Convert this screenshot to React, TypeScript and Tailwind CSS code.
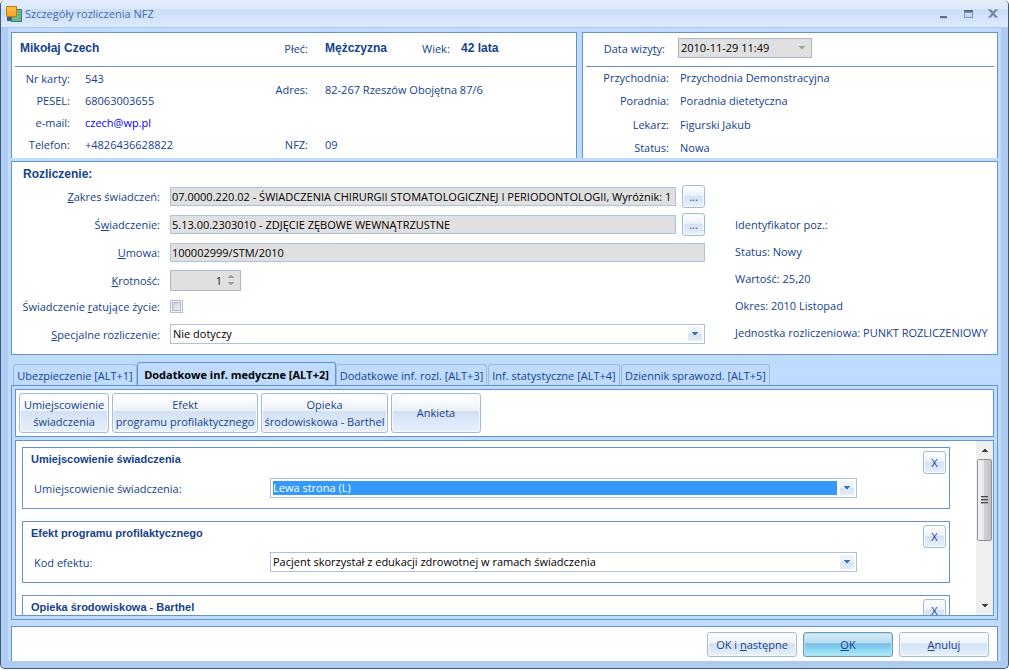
import React from 'react';

const panel = 'border border-[#6593cf] bg-white';
const button =
  'rounded-[3px] border border-[#a3bdd0] bg-[linear-gradient(#ffffff,#edf2f9_45%,#d2e1f4_46%,#e8f1fd)] text-center shadow-[inset_0_0_0_1px_#f6f9fd] hover:brightness-105';
const heading = 'font-["Liberation_Sans",sans-serif] font-bold';

const patient = [
  { label: 'Nr karty:', value: '543' },
  { label: 'PESEL:', value: '68063003655' },
  { label: 'e-mail:', value: 'czech@wp.pl', href: 'mailto:czech@wp.pl' },
  { label: 'Telefon:', value: '+4826436628822' },
];

const visit = [
  { label: 'Przychodnia:', value: 'Przychodnia Demonstracyjna' },
  { label: 'Poradnia:', value: 'Poradnia dietetyczna' },
  { label: 'Lekarz:', value: 'Figurski Jakub' },
  { label: 'Status:', value: 'Nowa' },
];

const info = [
  'Identyfikator poz.:',
  'Status: Nowy',
  'Wartość: 25,20',
  'Okres: 2010 Listopad',
  'Jednostka rozliczeniowa: PUNKT ROZLICZENIOWY',
];

const tabs = [
  { text: 'Ubezpieczenie [ALT+1]', width: 'w-[124px]' },
  { text: 'Dodatkowe inf. medyczne [ALT+2]', width: 'w-[199px]' },
  { text: 'Dodatkowe inf. rozl. [ALT+3]', width: 'w-[151px]' },
  { text: 'Inf. statystyczne [ALT+4]', width: 'w-[132px]' },
  { text: 'Dziennik sprawozd. [ALT+5]', width: 'w-[149px]' },
];

const tools = [
  { lines: ['Umiejscowienie', 'świadczenia'], width: 'w-[90px]' },
  { lines: ['Efekt', 'programu profilaktycznego'], width: 'w-[146px]' },
  { lines: ['Opieka', 'środowiskowa - Barthel'], width: 'w-[127px]' },
  { lines: ['Ankieta'], width: 'w-[90px]' },
];

const Arrow: React.FC<{ up?: boolean }> = ({ up }) => (
  <svg width="6" height="4" viewBox="0 0 6 4" shapeRendering="crispEdges" aria-hidden="true">
    <path d={up ? 'M0 4h6L3 0z' : 'M0 0h6L3 4z'} fill="currentColor" />
  </svg>
);

type ComboProps = {
  id: string;
  value: string;
  disabled?: boolean;
  selected?: boolean;
  className?: string;
};

const Combo: React.FC<ComboProps> = ({ id, value, disabled, selected, className = '' }) => (
  <div
    className={`flex h-[20px] min-w-0 items-stretch border p-[2px] ${
      disabled ? 'border-[#a9b8c6] bg-[#e0e0e0]' : 'border-[#abc1de] bg-white'
    } ${className}`}
  >
    <select
      id={id}
      disabled={disabled}
      className={`min-w-0 flex-1 appearance-none text-[11px] leading-[14px] opacity-100 outline-none ${
        selected ? 'bg-[#3399ff] text-white' : 'text-black'
      }`}
    >
      <option>{value}</option>
    </select>
    <span
      className={`ml-[3px] flex w-[14px] items-center justify-center ${
        disabled ? 'text-[#a5a294]' : 'bg-[linear-gradient(#eef4fc_50%,#d3e3f6_51%,#e3edfb)] text-[#3f6fae]'
      }`}
    >
      <Arrow />
    </span>
  </div>
);

const Field: React.FC<{ id: string; value: string }> = ({ id, value }) => (
  <input
    id={id}
    readOnly
    defaultValue={value}
    className="h-[19px] min-w-0 flex-1 border border-[#abc1de] bg-[#e0e0e0] px-px text-[11px] text-black outline-none"
  />
);

type RowProps = {
  id: string;
  before?: string;
  hot: string;
  after: string;
  height?: string;
  children: React.ReactNode;
};

const FormRow: React.FC<RowProps> = ({ id, before, hot, after, height = 'h-[28px]', children }) => (
  <div className={`flex items-center ${height}`}>
    <label htmlFor={id} className="mr-[10px] w-[148px] shrink-0 text-right whitespace-nowrap">
      {before}
      <u>{hot}</u>
      {after}
    </label>
    {children}
  </div>
);

type CardProps = { title: string; label?: string; id?: string; value?: string; selected?: boolean };

const Card: React.FC<CardProps> = ({ title, label, id, value, selected }) => (
  <section className={`${panel} mb-3 h-[62px] shrink-0 px-[3px] pt-[3px]`}>
    <div className="flex h-[27px] items-start justify-between">
      <h2 className={`${heading} pl-[5px] text-[11px] leading-[17px]`}>{title}</h2>
      <button type="button" aria-label={`Usuń: ${title}`} className={`${button} h-[23px] w-[23px]`}>
        X
      </button>
    </div>
    {id && value && (
      <div className="flex items-center pl-2">
        <label htmlFor={id} className="w-[236px] shrink-0">
          {label}
        </label>
        <Combo id={id} value={value} selected={selected} className="mr-[89px] flex-1" />
      </div>
    )}
  </section>
);

const TitleBar: React.FC = () => (
  <header className="flex h-[28px] shrink-0 items-center border-b border-[#a8c9f3] bg-[linear-gradient(#e4eefc,#dbe9fb_9px,#c9ddf9_9px,#deeafc)] pr-[9px] pl-[5px]">
    <svg width="17" height="17" viewBox="0 0 17 17" className="mr-[2px] translate-y-px" aria-hidden="true">
      <rect x="1" y="10" width="5" height="5" fill="#3858a6" />
      <rect x="5" y="3" width="11" height="13" fill="#2f8a62" />
      <rect x="6" y="4" width="9" height="11" fill="#64b991" />
      <rect x="0" y="0" width="11" height="11" rx="1" fill="#c9780d" />
      <rect x="1" y="1" width="9" height="9" fill="#f9a828" />
      <rect x="1" y="1" width="9" height="4" fill="#fcbd50" />
    </svg>
    <h1 className="flex-1 text-[11px] text-[#3e6aaa]">Szczegóły rozliczenia NFZ</h1>
    <div className="flex items-center gap-[13px]">
      <button type="button" aria-label="Minimalizuj">
        <svg width="12" height="12" viewBox="0 0 12 12" shapeRendering="crispEdges">
          <path d="M3 8h7v2H3z" fill="#5f6f86" />
          <path d="M3 10h7v1H3z" fill="#b3c6e0" />
        </svg>
      </button>
      <button type="button" aria-label="Maksymalizuj">
        <svg width="12" height="12" viewBox="0 0 12 12" shapeRendering="crispEdges">
          <path d="M2 2h9v8H2z" fill="#8198b8" />
          <path d="M2 2h9v2H2z" fill="#5f6f86" />
          <path d="M3 5h7v4H3z" fill="#c9daf2" />
        </svg>
      </button>
      <button type="button" aria-label="Zamknij">
        <svg width="12" height="12" viewBox="0 0 12 12">
          <path d="M3 2l6 7M9 2l-6 7" stroke="#71839f" strokeWidth="2" />
          <path d="M1 2h3M8 2h3M1 9h3M8 9h3" stroke="#71839f" />
        </svg>
      </button>
    </div>
  </header>
);

const PatientPanel: React.FC = () => (
  <section className={`${panel} border-b-0 pl-[3px]`}>
    <div className="flex h-[34px] items-center border-b border-[#6593cf] pb-[3px]">
      <strong className={`${heading} w-[200px] pl-[5px] text-[12px]`}>Mikołaj Czech</strong>
      <span className="w-[93px] text-right">Płeć:</span>
      <strong className={`${heading} ml-[17px] w-[97px] text-[12px]`}>Mężczyzna</strong>
      <span className="w-[28px]">Wiek:</span>
      <strong className={`${heading} ml-[11px] text-[12px]`}>42 lata</strong>
    </div>
    <div className="flex pb-[3px]">
      <dl className="w-[200px]">
        {patient.map((p) => (
          <div key={p.label} className="flex h-[22px] items-center">
            <dt className="mr-[15px] w-[55px] text-right">{p.label}</dt>
            <dd>
              {p.href ? (
                <a href={p.href} className="text-[#0000ff]">
                  {p.value}
                </a>
              ) : (
                p.value
              )}
            </dd>
          </div>
        ))}
      </dl>
      <dl className="flex flex-1 flex-col justify-between">
        <div className="flex h-[44px] items-center">
          <dt className="mr-[17px] w-[93px] text-right">Adres:</dt>
          <dd>82-267 Rzeszów Obojętna 87/6</dd>
        </div>
        <div className="flex h-[22px] items-center">
          <dt className="mr-[17px] w-[93px] text-right">NFZ:</dt>
          <dd>09</dd>
        </div>
      </dl>
    </div>
  </section>
);

const VisitPanel: React.FC = () => (
  <section className={`${panel} flex flex-col border-b-0 px-[3px]`}>
    <div className="flex h-[34px] items-center border-b border-[#6593cf] pb-[3px]">
      <label htmlFor="data" className="mr-[13px] w-[79px] text-right">
        Data wizy<u>t</u>y:
      </label>
      <Combo id="data" value="2010-11-29 11:49" disabled className="w-[134px]" />
    </div>
    <dl className="flex flex-1 flex-col justify-between">
      {visit.map((v) => (
        <div key={v.label} className="flex h-[20px] items-center">
          <dt className="mr-[11px] w-[83px] text-right">{v.label}</dt>
          <dd>{v.value}</dd>
        </div>
      ))}
    </dl>
  </section>
);

const Settlement: React.FC = () => (
  <section className={`${panel} mt-[3px] pt-1 pb-1`}>
    <h2 className={`${heading} pl-[11px] text-[12px] leading-[16px]`}>Rozliczenie:</h2>
    <div className="flex">
      <div className="min-w-0 flex-1">
        <FormRow id="zakres" hot="Z" after="akres świadczeń:">
          <Field id="zakres" value="07.0000.220.02 - ŚWIADCZENIA CHIRURGII STOMATOLOGICZNEJ I PERIODONTOLOGII, Wyróżnik: 1" />
          <button type="button" className={`${button} ml-[6px] h-[23px] w-[23px]`}>
            ...
          </button>
        </FormRow>
        <FormRow id="swiadczenie" before="Ś" hot="w" after="iadczenie:">
          <Field id="swiadczenie" value="5.13.00.2303010 - ZDJĘCIE ZĘBOWE WEWNĄTRZUSTNE" />
          <button type="button" className={`${button} ml-[6px] h-[23px] w-[23px]`}>
            ...
          </button>
        </FormRow>
        <FormRow id="umowa" hot="U" after="mowa:">
          <Field id="umowa" value="100002999/STM/2010" />
        </FormRow>
        <FormRow id="krotnosc" hot="K" after="rotność:">
          <div className="flex h-[21px] w-[71px] items-center border border-[#abb9c8] bg-[#e0e0e0] pr-[6px]">
            <input
              id="krotnosc"
              readOnly
              defaultValue="1"
              className="min-w-0 flex-1 bg-transparent pr-[6px] text-right text-[11px] text-[#1c1c1c] outline-none"
            />
            <span className="flex flex-col gap-1 text-[#a5a294]">
              <Arrow up />
              <Arrow />
            </span>
          </div>
        </FormRow>
        <FormRow id="zycie" before="Świadczenie " hot="r" after="atujące życie:" height="h-[24px]">
          <input
            id="zycie"
            type="checkbox"
            className="h-[13px] w-[13px] appearance-none border border-[#abc1de] bg-[linear-gradient(135deg,#c3c8d0,#f8f8f8)] shadow-[inset_0_0_0_1px_#f4f4f4,inset_0_0_0_2px_#b3bac4]"
          />
        </FormRow>
        <FormRow id="specjalne" hot="S" after="pecjalne rozliczenie:" height="h-8">
          <Combo id="specjalne" value="Nie dotyczy" className="flex-1" />
        </FormRow>
      </div>
      <ul className="ml-[30px] w-[262px] pt-[29px]">
        {info.map((text) => (
          <li key={text} className="flex h-[27px] items-center whitespace-nowrap">
            {text}
          </li>
        ))}
      </ul>
    </div>
  </section>
);

const Tabs: React.FC = () => (
  <div role="tablist" className="mt-[7px] flex items-end pl-[2px]">
    {tabs.map((t, i) => (
      <button
        key={t.text}
        type="button"
        role="tab"
        aria-selected={i === 1}
        className={`shrink-0 rounded-t-[3px] border border-b-0 whitespace-nowrap ${t.width} ${
          i === 1 ? 'h-[23px] border-[#6593cf] font-bold text-black' : 'mr-px h-[21px] border-[#9dbcd0] first:mr-0'
        }`}
      >
        {t.text}
      </button>
    ))}
  </div>
);

const ScrollBar: React.FC = () => (
  <div className="flex w-[17px] shrink-0 flex-col items-center bg-[#efefef] text-[#404040]">
    <div className="flex h-[18px] items-center">
      <Arrow up />
    </div>
    <div className="flex h-[82px] w-[15px] flex-col items-center justify-center gap-px rounded-[2px] border border-[#8f9396] bg-[linear-gradient(90deg,#f5f5f5,#e6e6e7_45%,#cfd0d3_50%,#c0c1c5)]">
      <i className="h-[2px] w-[7px] border-t border-[#4c4c4c] bg-[#a3a3a3]" />
      <i className="h-[2px] w-[7px] border-t border-[#4c4c4c] bg-[#a3a3a3]" />
      <i className="h-[2px] w-[7px] border-t border-[#4c4c4c] bg-[#a3a3a3]" />
    </div>
    <div className="mt-auto flex h-[18px] items-center">
      <Arrow />
    </div>
  </div>
);

const App: React.FC = () => {
  return (
    <div className='h-screen bg-white pb-[2px] font-["Open_Sans","Noto_Sans",sans-serif] text-[11px] leading-[15px] text-[#15428b]'>
      <div className="flex h-full flex-col overflow-hidden rounded-[5px] border border-t-0 border-[#3b5a82] bg-[#b0cbf0]">
        <TitleBar />
        <main className="mx-[7px] mb-[7px] flex min-h-0 flex-1 flex-col bg-[#bfdbff] px-[3px] pt-1">
          <div className="grid grid-cols-[566fr_416fr] gap-[5px]">
            <PatientPanel />
            <VisitPanel />
          </div>
          <Settlement />
          <Tabs />
          <div className="flex min-h-0 flex-1 flex-col border border-[#6593cf] p-[3px]">
            <div className={`${panel} flex gap-[3px] p-[3px]`}>
              {tools.map((t) => (
                <button key={t.lines[0]} type="button" className={`${button} h-10 pb-px leading-[17px] whitespace-nowrap ${t.width}`}>
                  {t.lines.map((line) => (
                    <span key={line} className="block">
                      {line}
                    </span>
                  ))}
                </button>
              ))}
            </div>
            <div className={`${panel} mt-[3px] flex min-h-0 flex-1`}>
              <div className="mr-[26px] ml-[6px] flex min-w-0 flex-1 flex-col overflow-hidden pt-[6px]">
                <Card
                  title="Umiejscowienie świadczenia"
                  label="Umiejscowienie świadczenia:"
                  id="umiejscowienie"
                  value="Lewa strona (L)"
                  selected
                />
                <Card
                  title="Efekt programu profilaktycznego"
                  label="Kod efektu:"
                  id="efekt"
                  value="Pacjent skorzystał z edukacji zdrowotnej w ramach świadczenia"
                />
                <Card title="Opieka środowiskowa - Barthel" />
              </div>
              <ScrollBar />
            </div>
          </div>
          <footer className={`${panel} mt-[6px] flex shrink-0 justify-end gap-[6px] border-b-0 px-2 pt-[5px] pb-1`}>
            <button type="button" className={`${button} h-[25px] w-[90px]`}>
              OK i <u>n</u>astępne
            </button>
            <button
              type="button"
              className="h-[25px] w-[90px] rounded-[3px] border border-[#6d9bb4] bg-[linear-gradient(#d9edf8,#b4daef_45%,#74bce6_46%,#a8f2fb)] shadow-[inset_0_0_0_1px_#b5def0]"
            >
              <u>O</u>K
            </button>
            <button type="button" className={`${button} h-[25px] w-[90px]`}>
              <u>A</u>nuluj
            </button>
          </footer>
        </main>
      </div>
    </div>
  );
};

export default App;
